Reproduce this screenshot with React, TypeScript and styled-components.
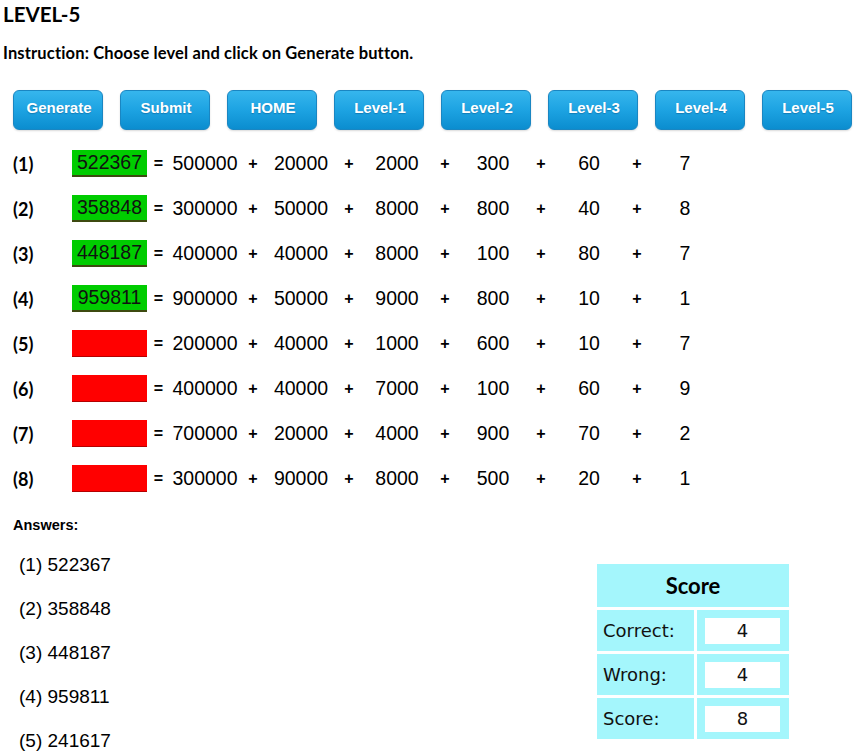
import React from 'react';
import styled, { createGlobalStyle } from 'styled-components';

const GlobalStyle = createGlobalStyle`
  html, body { margin: 0; padding: 0; background: #fff; }
  body { font-family: "Liberation Sans", Arial, sans-serif; color: #000; }
  * { box-sizing: border-box; }
`;

const Page = styled.div`
  width: 856px;
  height: 753px;
  overflow: hidden;
  padding-left: 3px;
`;

const Title = styled.h1`
  margin: 0;
  font-family: Lato, "Open Sans", sans-serif;
  font-weight: 700;
  font-size: 20.5px;
  line-height: 28px;
`;

const Instruction = styled.p`
  margin: 15px 0 0;
  font-family: Lato, "Open Sans", sans-serif;
  font-weight: 700;
  font-size: 16.5px;
  letter-spacing: 0.15px;
  line-height: 20px;
`;

const ButtonBar = styled.div`
  display: flex;
  gap: 17px;
  margin: 27px 0 0 10px;
`;

const Button = styled.button`
  width: 90px;
  height: 40px;
  border: 1px solid #1a86c2;
  border-radius: 6px;
  background: linear-gradient(to bottom, #36b6ed 0%, #1da3e2 50%, #0b8dcf 100%);
  color: #fff;
  font-family: "Liberation Sans", Arial, sans-serif;
  font-weight: 700;
  font-size: 15px;
  padding: 0 0 5px 2px;
  text-shadow: 0 1px 1px rgba(0, 60, 110, 0.35);
  box-shadow: 0 1px 2px rgba(0, 0, 0, 0.15);
  cursor: pointer;
`;

const Rows = styled.div`
  margin: 11px 0 0 10px;
`;

const Row = styled.div`
  display: grid;
  grid-template-columns: 59px 75px 23px repeat(5, 70px 26px) 70px;
  height: 45px;
  align-items: center;
`;

const Label = styled.span`
  font-family: Lato, "Open Sans", sans-serif;
  font-weight: 700;
  font-size: 18px;
`;

const AnswerBox = styled.div<{ $ok: boolean }>`
  width: 75px;
  height: 27px;
  background: ${(p) => (p.$ok ? '#00cc00' : '#ff0000')};
  border-bottom: ${(p) => (p.$ok ? '2px solid #3d4a10' : '1px solid #b40000')};
  font-size: 19.5px;
  line-height: 25px;
  text-align: center;
  color: #111;
`;

const Sign = styled.span`
  font-weight: 700;
  font-size: 16px;
  text-align: center;
`;

const Num = styled.span`
  font-size: 19.5px;
  text-align: center;
`;

const AnswersLabel = styled.div`
  margin: 14px 0 0 10px;
  font-weight: 700;
  font-size: 14.5px;
  line-height: 20px;
`;

const Bottom = styled.div`
  display: flex;
  margin: 8px 0 0 16px;
`;

const AnswerList = styled.div`
  width: 578px;
`;

const AnswerLine = styled.div`
  font-size: 19px;
  line-height: 44px;
`;

const ScoreBox = styled.div`
  margin-top: 21px;
  display: grid;
  grid-template-columns: 97px 92px;
  grid-template-rows: 43px 41px 41px 41px;
  gap: 3px;
  align-self: flex-start;
`;

const ScoreHead = styled.div`
  grid-column: 1 / span 2;
  background: #a4f6fc;
  display: flex;
  align-items: center;
  justify-content: center;
  font-family: Lato, "Open Sans", sans-serif;
  font-weight: 700;
  font-size: 22px;
`;

const ScoreLabel = styled.div`
  background: #a4f6fc;
  display: flex;
  align-items: center;
  padding-left: 6px;
  font-family: "DejaVu Sans", Verdana, sans-serif;
  font-size: 18px;
  color: #111;
`;

const ScoreCell = styled.div`
  background: #a4f6fc;
  display: flex;
  align-items: center;
  padding-left: 8px;
`;

const ScoreValue = styled.div`
  width: 75px;
  height: 26px;
  background: #fff;
  text-align: center;
  line-height: 26px;
  font-family: "DejaVu Sans", Verdana, sans-serif;
  font-size: 18px;
  color: #111;
`;

const buttons = ['Generate', 'Submit', 'HOME', 'Level-1', 'Level-2', 'Level-3', 'Level-4', 'Level-5'];

const rows: { answer: string; ok: boolean; terms: string[] }[] = [
  { answer: '522367', ok: true, terms: ['500000', '20000', '2000', '300', '60', '7'] },
  { answer: '358848', ok: true, terms: ['300000', '50000', '8000', '800', '40', '8'] },
  { answer: '448187', ok: true, terms: ['400000', '40000', '8000', '100', '80', '7'] },
  { answer: '959811', ok: true, terms: ['900000', '50000', '9000', '800', '10', '1'] },
  { answer: '', ok: false, terms: ['200000', '40000', '1000', '600', '10', '7'] },
  { answer: '', ok: false, terms: ['400000', '40000', '7000', '100', '60', '9'] },
  { answer: '', ok: false, terms: ['700000', '20000', '4000', '900', '70', '2'] },
  { answer: '', ok: false, terms: ['300000', '90000', '8000', '500', '20', '1'] },
];

const answers = ['522367', '358848', '448187', '959811', '241617'];

const scores = [
  ['Correct:', '4'],
  ['Wrong:', '4'],
  ['Score:', '8'],
];

export default function App() {
  return (
    <Page>
      <GlobalStyle />
      <Title>LEVEL-5</Title>
      <Instruction>Instruction: Choose level and click on Generate button.</Instruction>
      <ButtonBar>
        {buttons.map((b) => (
          <Button key={b}>{b}</Button>
        ))}
      </ButtonBar>
      <Rows>
        {rows.map((r, i) => (
          <Row key={i}>
            <Label>({i + 1})</Label>
            <AnswerBox $ok={r.ok}>{r.answer}</AnswerBox>
            <Sign>=</Sign>
            {r.terms.map((t, j) => (
              <React.Fragment key={j}>
                {j > 0 && <Sign>+</Sign>}
                <Num>{t}</Num>
              </React.Fragment>
            ))}
          </Row>
        ))}
      </Rows>
      <AnswersLabel>Answers:</AnswersLabel>
      <Bottom>
        <AnswerList>
          {answers.map((a, i) => (
            <AnswerLine key={i}>
              ({i + 1}) {a}
            </AnswerLine>
          ))}
        </AnswerList>
        <ScoreBox>
          <ScoreHead>Score</ScoreHead>
          {scores.map(([l, v]) => (
            <React.Fragment key={l}>
              <ScoreLabel>{l}</ScoreLabel>
              <ScoreCell>
                <ScoreValue>{v}</ScoreValue>
              </ScoreCell>
            </React.Fragment>
          ))}
        </ScoreBox>
      </Bottom>
    </Page>
  );
}
